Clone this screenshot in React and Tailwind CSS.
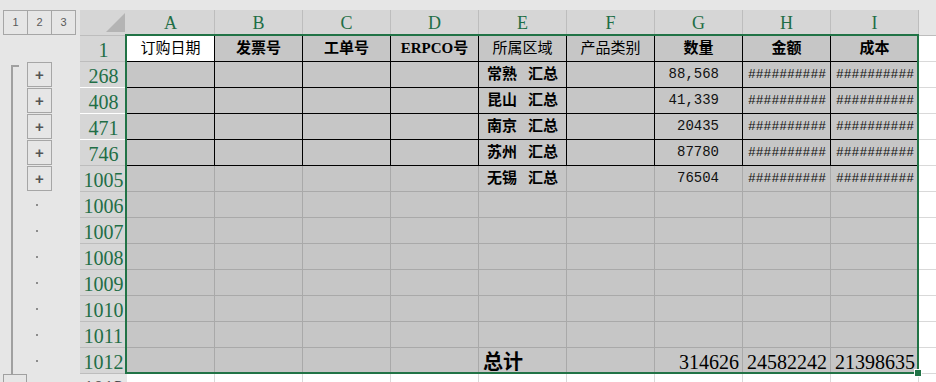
import React from "react";

const SERIF = "font-['Liberation_Serif','Noto_Sans_CJK_SC',serif]";
const MONO = "font-['Liberation_Mono','Noto_Sans_CJK_SC',monospace]";
const CJK = "font-['Liberation_Serif','Noto_Sans_CJK_SC',sans-serif]";

const cols = ["A", "B", "C", "D", "E", "F", "G", "H", "I"];

const headerTexts = [
  { t: "订购日期", b: false },
  { t: "发票号", b: true },
  { t: "工单号", b: true },
  { t: "ERPCO号", b: true },
  { t: "所属区域", b: false },
  { t: "产品类别", b: false },
  { t: "数量", b: true },
  { t: "金额", b: true },
  { t: "成本", b: true },
];

const dataRows = [
  { n: "268", e: "常熟", g: "88,568", black: true, hb: "border-b-white" },
  { n: "408", e: "昆山", g: "41,339", black: true, hb: "border-b-white" },
  { n: "471", e: "南京", g: "20435", black: true, hb: "border-b-white" },
  { n: "746", e: "苏州", g: "87780", black: true, hb: "border-b-[#bdbdbd]" },
  { n: "1005", e: "无锡", g: "76504", black: false, hb: "border-b-[#bdbdbd]" },
];

const emptyRows = ["1006", "1007", "1008", "1009", "1010", "1011"];

function RowHeader({ n, hb = "border-b-[#bdbdbd]" }) {
  return (
    <div
      className={`w-[47px] h-full shrink-0 bg-[#d6d6d6] border-b ${hb} flex items-center justify-center pt-[3px] ${SERIF} text-[20px] leading-none text-[#1f6e46]`}
    >
      {n}
    </div>
  );
}

function Filler() {
  return <div className="flex-1 h-full bg-white border-b border-[#d9d9d9]" />;
}

function Cell({ black, children, className = "" }) {
  return (
    <div
      className={`w-[88px] h-full shrink-0 border-r border-b overflow-hidden whitespace-nowrap flex items-center ${
        black ? "border-black" : "border-[#a9a9a9]"
      } bg-[#c6c6c6] ${className}`}
    >
      {children}
    </div>
  );
}

function Gutter() {
  return (
    <div className="w-[80px] shrink-0 flex flex-col">
      <div className="h-[26px] shrink-0 flex items-start pl-[3px]">
        {["1", "2", "3"].map((x, i) => (
          <div
            key={x}
            className={`w-[25px] h-[25px] shrink-0 border border-[#a6a6a6] flex items-center justify-center font-['Liberation_Sans',sans-serif] text-[11px] text-[#5a5a5a] ${
              i > 0 ? "-ml-px" : ""
            }`}
          >
            {x}
          </div>
        ))}
      </div>
      <div className="h-[26px] shrink-0" />
      <div className="flex shrink-0">
        <div className="w-[27px] shrink-0 flex flex-col">
          <div className="ml-[11px] mt-[3px] h-[309px] w-[8px] shrink-0 border-l-2 border-t-2 border-[#a0a0a0]" />
          <div className="ml-[3px] w-[24px] h-[24px] shrink-0 border border-[#a0a0a0]" />
        </div>
        <div className="flex flex-col shrink-0">
          {dataRows.map((r) => (
            <div key={r.n} className="h-[26px] shrink-0 flex items-start">
              <div className="w-[25px] h-[25px] shrink-0 border border-[#a6a6a6] flex items-center justify-center text-[#555] font-['Liberation_Sans',sans-serif] font-bold text-[15px] leading-none pb-[1px]">
                +
              </div>
            </div>
          ))}
          {[...emptyRows, "1012"].map((n) => (
            <div key={n} className="h-[26px] shrink-0 flex items-center pl-[9px]">
              <div className="w-[2px] h-[2px] bg-[#8c8c8c]" />
            </div>
          ))}
        </div>
      </div>
    </div>
  );
}

export default function App() {
  return (
    <div className="w-[936px] h-[382px] overflow-hidden bg-[#e6e6e6] pt-[10px] flex items-start">
      <Gutter />
      <div className="relative flex-1 flex flex-col">
        {/* column header row */}
        <div className="h-[26px] flex shrink-0">
          <div className="w-[47px] h-full shrink-0 bg-[#d6d6d6] border-b border-[#bdbdbd] flex items-end justify-end pr-[2px] pb-[3px]">
            <svg width="19" height="19" viewBox="0 0 19 19">
              <polygon points="19,0 19,19 0,19" fill="#b4b4b4" />
            </svg>
          </div>
          {cols.map((c) => (
            <div
              key={c}
              className={`w-[88px] h-full shrink-0 bg-[#d6d6d6] border-r border-b border-[#bdbdbd] flex items-center justify-center ${SERIF} text-[18px] leading-none text-[#1f6e46]`}
            >
              {c}
            </div>
          ))}
          <div className="flex-1 h-full bg-[#e6e6e6] border-b border-[#bdbdbd]" />
        </div>

        {/* row 1 */}
        <div className="h-[26px] flex shrink-0">
          <RowHeader n="1" />
          {headerTexts.map((h, i) => (
            <Cell
              key={i}
              black
              className={`justify-center ${CJK} text-[15px] text-black ${
                h.b ? "font-bold" : ""
              } ${i === 0 ? "!bg-white" : ""}`}
            >
              {h.t}
            </Cell>
          ))}
          <Filler />
        </div>

        {/* data rows */}
        {dataRows.map((r) => (
          <div key={r.n} className="h-[26px] flex shrink-0">
            <RowHeader n={r.n} hb={r.hb} />
            {cols.map((c) => {
              if (c === "E")
                return (
                  <Cell key={c} black={r.black} className={`pl-[8px] gap-[11px] ${CJK} font-bold text-[15px] text-black`}>
                    <span>{r.e}</span>
                    <span>汇总</span>
                  </Cell>
                );
              if (c === "G")
                return (
                  <Cell key={c} black={r.black} className={`justify-end pr-[23px] ${MONO} text-[14px] text-[#111]`}>
                    {r.g}
                  </Cell>
                );
              if (c === "H" || c === "I")
                return (
                  <Cell key={c} black={r.black} className={`pl-[5px] ${MONO} text-[13px] text-[#111]`}>
                    ##########
                  </Cell>
                );
              return <Cell key={c} black={r.black} />;
            })}
            <Filler />
          </div>
        ))}

        {emptyRows.map((n) => (
          <div key={n} className="h-[26px] flex shrink-0">
            <RowHeader n={n} />
            {cols.map((c) => (
              <Cell key={c} />
            ))}
            <Filler />
          </div>
        ))}

        {/* total row */}
        <div className="h-[26px] flex shrink-0">
          <RowHeader n="1012" />
          {cols.map((c) => {
            if (c === "E")
              return (
                <Cell key={c} className={`pl-[4px] pt-[3px] ${CJK} font-bold text-[20px] text-black`}>
                  总计
                </Cell>
              );
            if (c === "G" || c === "H" || c === "I") {
              const v = { G: "314626", H: "24582242", I: "21398635" }[c];
              return (
                <Cell key={c} className={`justify-end pr-[3px] pt-[3px] ${SERIF} text-[20px] text-black`}>
                  {v}
                </Cell>
              );
            }
            return <Cell key={c} />;
          })}
          <Filler />
        </div>

        {/* row 1013 (cut) */}
        <div className="h-[26px] flex shrink-0">
          <div className={`w-[47px] h-full shrink-0 bg-[#e6e6e6] flex items-start justify-center pt-[4px] ${SERIF} text-[20px] leading-none text-[#444]`}>
            1013
          </div>
          {cols.map((c) => (
            <div key={c} className="w-[88px] h-full shrink-0 bg-white border-r border-[#d9d9d9]" />
          ))}
          <div className="flex-1 bg-white" />
        </div>

        {/* selection outline */}
        <div className="absolute left-[45px] top-[24px] w-[794px] h-[340px] border-2 border-[#217346] pointer-events-none">
          <div className="absolute -right-[4px] -bottom-[4px] w-[6px] h-[6px] bg-[#217346] ring-1 ring-white" />
        </div>
      </div>
    </div>
  );
}
